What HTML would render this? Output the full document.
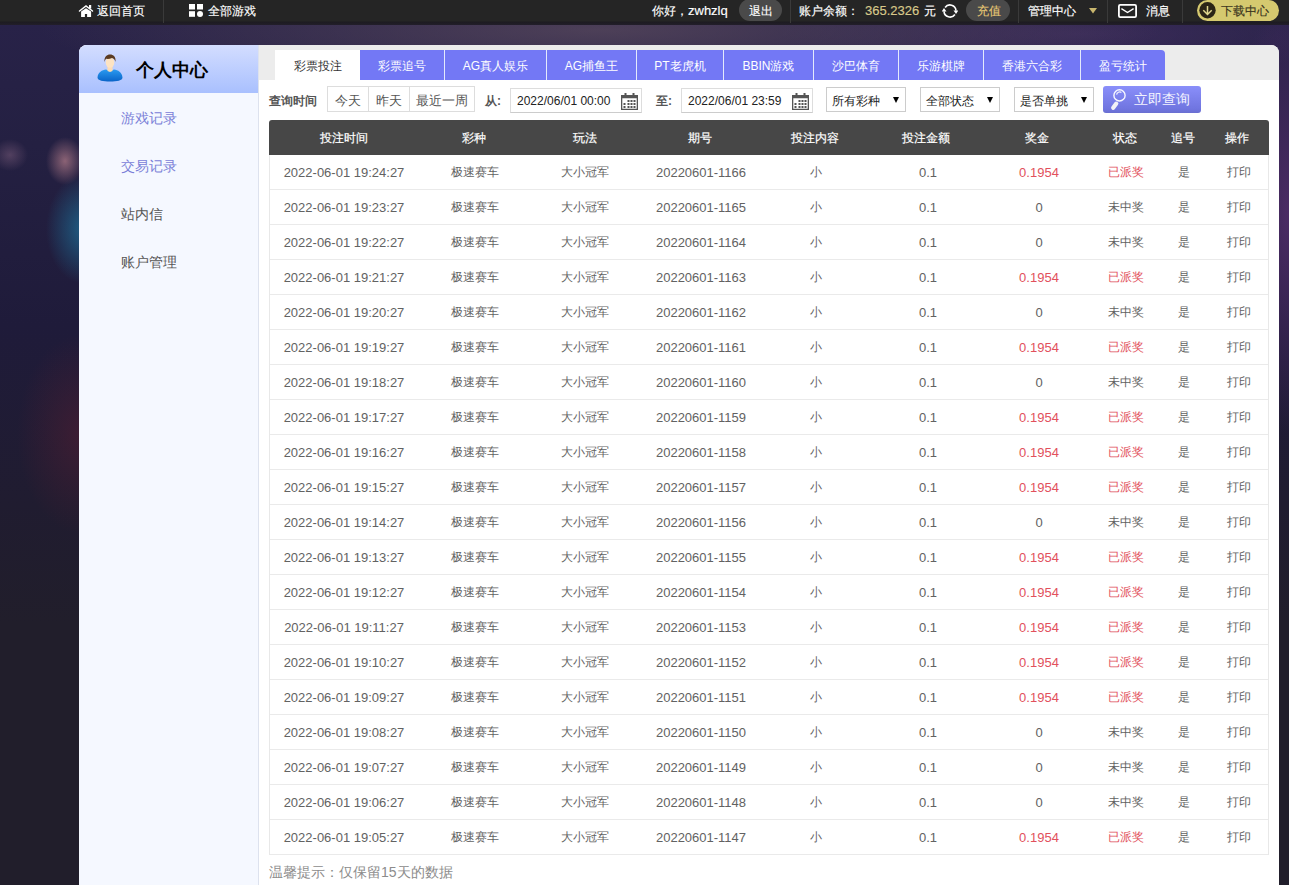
<!DOCTYPE html>
<html><head><meta charset="utf-8">
<style>
*{margin:0;padding:0;box-sizing:border-box}
html,body{width:1289px;height:885px;overflow:hidden}
body{font-family:"Liberation Sans",sans-serif;font-size:12px;color:#555;position:relative;background:#211e2c}
.abs{position:absolute}
.bg{position:absolute;left:0;top:24px;width:1289px;height:861px;
background:
radial-gradient(ellipse 19px 24px at 65px 137px,rgba(165,115,130,0.8),rgba(165,115,130,0) 100%),
radial-gradient(ellipse 18px 16px at 10px 131px,rgba(120,90,120,0.55),rgba(120,90,120,0) 100%),
radial-gradient(ellipse 38px 55px at 84px 205px,rgba(30,115,155,0.75),rgba(30,115,155,0) 100%),
radial-gradient(ellipse 65px 100px at 82px 410px,rgba(85,30,50,0.55),rgba(85,30,50,0) 100%),
radial-gradient(ellipse 60px 220px at 1289px 190px,rgba(80,45,105,0.9),rgba(80,45,105,0) 100%),
radial-gradient(ellipse 560px 60px at 600px 6px,rgba(100,82,98,0.62),rgba(100,82,98,0) 100%),
radial-gradient(ellipse 300px 40px at 1080px 10px,rgba(70,50,100,0.6),rgba(70,50,100,0) 100%),
linear-gradient(180deg,#282248 0px,#242042 120px,#1f1b3a 300px,#201c30 480px,#211e2b 600px,#211e2b 861px)}
.topbar{position:absolute;left:0;top:0;width:1289px;height:25px;background:linear-gradient(180deg,#252525 0,#252525 21px,#1d1b21 22px,#221e2a 25px);color:#fff;font-size:12px}
.topbar .t{position:absolute;top:0;line-height:22px;white-space:nowrap;-webkit-text-stroke:0.15px}
.sep{position:absolute;top:0;width:1px;height:23px;background:#3a3a3a}
.pill{position:absolute;top:-1px;height:22px;border-radius:11px;background:#4a4a4a}
.panel{position:absolute;left:79px;top:45px;width:1200px;height:860px;background:#fff;border-radius:8px 8px 0 0;overflow:hidden}
.side{position:absolute;left:0;top:0;width:180px;height:860px;background:#f5f8ff;border-right:1px solid #dde2ee}
.side .hd{position:absolute;left:0;top:0;width:179px;height:48px;background:linear-gradient(180deg,#d3ddff,#a9c0fe)}
.side .hd b{position:absolute;left:57px;top:13px;font-size:18px;color:#000}
.side .it{position:absolute;left:42px;font-size:14px;color:#555}
.side .it.on{color:#7a80d8}
.tabband{position:absolute;left:180px;top:0;width:1020px;height:35px;background:#ececec}
.tab{position:absolute;top:50px;height:30px;background:#7378f5;color:#fff;font-size:12px;text-align:center;line-height:28px;padding-top:2px;white-space:nowrap}
.tab.act{background:#fff;color:#333}
.flt{position:absolute;font-size:13px;white-space:nowrap}
.qb{position:absolute;top:86px;height:26px;border:1px solid #ddd;background:#fff;font-size:13px;line-height:24px;padding-top:2px;text-align:center;color:#555}
.inp{position:absolute;top:88px;height:25px;border:1px solid #ddd;border-bottom-color:#ccc;background:#fff;font-size:12px;line-height:23px;color:#222;padding-left:6px;padding-top:1px}
.sel{position:absolute;top:87px;height:25px;border:1px solid #ccc;background:#fff;font-size:12px;line-height:23px;color:#222;padding-left:5px;padding-top:2px}
.sel i{position:absolute;right:6px;top:9px;width:0;height:0;border-left:3px solid transparent;border-right:3px solid transparent;border-top:6px solid #000}
.btn{position:absolute;left:1103px;top:86px;width:98px;height:27px;border-radius:3px;background:linear-gradient(180deg,#8a8ffa,#7075e0 85%,#6a6fd0);color:#f4f4ff;font-size:14px;line-height:27px}
table{position:absolute;left:269px;top:120px;width:1000px;border-collapse:separate;border-spacing:0;font-size:12px;table-layout:fixed}
td.n{font-size:13px}
th{-webkit-text-stroke:0.2px}
td:nth-child(2){padding-left:1px}td:nth-child(4){padding-left:2px}td:nth-child(5){padding-left:1px}
td:nth-child(6){padding-left:4px}td:nth-child(7){padding-left:4px}td:nth-child(8){padding-left:3px}td:nth-child(9){padding-left:2px}
th:nth-child(10){padding-right:4px}

th{background:#474747;color:#fff;font-weight:normal;height:35px;padding:2px 0 0 0}
td{height:35px;text-align:center;border-bottom:1px solid #eaeaea;color:#626262;padding:0;white-space:nowrap}

.red{color:#e2505c}
</style></head><body>
<div class="bg"></div>
<div class="topbar">
 <svg class="abs" style="left:78px;top:4px" width="16" height="14" viewBox="0 0 16 14">
  <polyline points="1.5,7 8,1.9 14.5,7" fill="none" stroke="#fff" stroke-width="1.5" stroke-linecap="round" stroke-linejoin="miter"/>
  <rect x="11" y="1" width="2.2" height="3.6" fill="#fff"/>
  <path d="M3.1 7.6 L8 4.3 L13.1 7.6 V13.1 H9.1 V10.1 H6.9 V13.1 H3.1 Z" fill="#fff"/>
 </svg>
 <span class="t" style="left:97px">返回首页</span>
 <div class="sep" style="left:163px"></div>
 <svg class="abs" style="left:189px;top:4px" width="14" height="13" viewBox="0 0 14 13">
  <rect x="0" y="0" width="6" height="5.5" fill="#fff"/><rect x="8" y="0" width="6" height="5.5" fill="#fff"/>
  <rect x="0" y="7.2" width="6" height="5.6" fill="#fff"/><circle cx="11" cy="10" r="3" fill="#fff"/>
 </svg>
 <span class="t" style="left:208px">全部游戏</span>
 <span class="t" style="left:652px">你好，<span style="font-size:13px">zwhzlq</span></span>
 <div class="pill" style="left:739px;width:43px"></div>
 <span class="t" style="left:749px">退出</span>
 <div class="sep" style="left:790px"></div>
 <span class="t" style="left:799px">账户余额：</span>
 <span class="t" style="left:865px;color:#d8c98a;font-size:13px">365.2326</span>
 <span class="t" style="left:924px">元</span>
 <svg class="abs" style="left:942px;top:3px" width="16" height="16" viewBox="0 0 16 16">
  <path d="M3.09 4.56 A6 6 0 0 1 14 7.6" fill="none" stroke="#fff" stroke-width="1.6"/>
  <path d="M12.91 11.44 A6 6 0 0 1 2 8.4" fill="none" stroke="#fff" stroke-width="1.6"/>
  <path d="M11.5 7.4 L16.5 7.4 L14 11 Z" fill="#fff"/>
  <path d="M-0.5 8.6 L4.5 8.6 L2 5 Z" fill="#fff"/>
 </svg>
 <div class="pill" style="left:966px;width:44px"></div>
 <span class="t" style="left:977px;color:#e6c874">充值</span>
 <div class="sep" style="left:1018px"></div>
 <span class="t" style="left:1028px">管理中心</span>
 <svg class="abs" style="left:1089px;top:8px" width="8" height="6" viewBox="0 0 8 6"><path d="M0 0 H8 L4 5.5 Z" fill="#c9b76e"/></svg>
 <div class="sep" style="left:1107px"></div>
 <svg class="abs" style="left:1118px;top:4px" width="19" height="14" viewBox="0 0 19 14">
  <rect x="0.9" y="0.9" width="17.2" height="12.2" rx="1.3" fill="none" stroke="#fff" stroke-width="1.8"/>
  <polyline points="3.4,4.6 9.5,8.5 15.6,4.6" fill="none" stroke="#fff" stroke-width="1.4"/>
 </svg>
 <span class="t" style="left:1146px">消息</span>
 <div class="sep" style="left:1182px"></div>
 <div class="pill" style="left:1197px;width:82px;top:0;height:21px;border-radius:10.5px;background:#d5c96f"></div>
 <svg class="abs" style="left:1199px;top:2px" width="17" height="17" viewBox="0 0 17 17">
  <circle cx="8.5" cy="8.3" r="8.2" fill="#2b2516"/>
  <path d="M8.5 4 V12.4 M4.3 8.3 L8.5 12.5 L12.7 8.3" fill="none" stroke="#e0d78e" stroke-width="1.5"/>
 </svg>
 <span class="t" style="left:1221px;color:#3b3520">下载中心</span>
</div>
<div class="panel">
 <div class="side">
  <div class="hd"><svg class="abs" style="left:18px;top:8px" width="26" height="29" viewBox="0 0 26 29">
 <defs><linearGradient id="bd" x1="0" y1="0" x2="0" y2="1"><stop offset="0" stop-color="#2a9af0"/><stop offset="1" stop-color="#0a64c8"/></linearGradient></defs>
 <path d="M0.5 24.5 C1 19 5 17 9 16.5 L13 18 L17 16.5 C21 17 25 19 25.5 24.5 C25.5 27.5 20 28.5 13 28.5 C6 28.5 0.5 27.5 0.5 24.5 Z" fill="url(#bd)"/>
 <path d="M10.5 13 H15.5 V18 L13 19 L10.5 18 Z" fill="#fcdcb4"/>
 <ellipse cx="13" cy="9.5" rx="4.3" ry="5.2" fill="#fde3c2"/>
 <path d="M7.5 9 C7 3.5 10 1.5 13 1.5 C16.5 1.5 19 3.5 18.5 9 C18 6.5 16.5 5.5 15 5 C13 6 10.5 6 9 5.8 C8.2 6.8 7.8 8 7.5 9 Z" fill="#5b3b22"/>
</svg><b>个人中心</b></div>
  <div class="it on" style="top:65px">游戏记录</div>
  <div class="it on" style="top:113px">交易记录</div>
  <div class="it" style="top:161px">站内信</div>
  <div class="it" style="top:209px">账户管理</div>
 </div>
 <div class="tabband"></div>
</div>
<div class="tab act" style="left:275px;width:85px">彩票投注</div>
<div class="tab" style="left:360px;width:84px">彩票追号</div>
<div class="tab" style="left:445px;width:101px">AG真人娱乐</div>
<div class="tab" style="left:547px;width:89px">AG捕鱼王</div>
<div class="tab" style="left:637px;width:86px">PT老虎机</div>
<div class="tab" style="left:724px;width:89px">BBIN游戏</div>
<div class="tab" style="left:814px;width:84px">沙巴体育</div>
<div class="tab" style="left:899px;width:84px">乐游棋牌</div>
<div class="tab" style="left:984px;width:96px">香港六合彩</div>
<div class="tab" style="left:1081px;width:84px;border-top-right-radius:4px">盈亏统计</div>

<div class="abs" style="left:444px;top:50px;width:1px;height:30px;background:#e4eafc"></div><div class="abs" style="left:546px;top:50px;width:1px;height:30px;background:#e4eafc"></div><div class="abs" style="left:636px;top:50px;width:1px;height:30px;background:#e4eafc"></div><div class="abs" style="left:723px;top:50px;width:1px;height:30px;background:#e4eafc"></div><div class="abs" style="left:813px;top:50px;width:1px;height:30px;background:#e4eafc"></div><div class="abs" style="left:898px;top:50px;width:1px;height:30px;background:#e4eafc"></div><div class="abs" style="left:983px;top:50px;width:1px;height:30px;background:#e4eafc"></div><div class="abs" style="left:1080px;top:50px;width:1px;height:30px;background:#e4eafc"></div>
<div class="flt" style="left:269px;top:93px;font-weight:bold;color:#555;font-size:12px">查询时间</div>
<div class="qb" style="left:327px;width:42px">今天</div>
<div class="qb" style="left:368px;width:42px">昨天</div>
<div class="qb" style="left:409px;width:66px">最近一周</div>
<div class="flt" style="left:485px;top:93px;font-weight:bold;color:#555;font-size:12px">从:</div>
<div class="inp" style="left:510px;width:132px">2022/06/01 00:00</div>
<div class="flt" style="left:656px;top:93px;font-weight:bold;color:#555;font-size:12px">至:</div>
<div class="inp" style="left:681px;width:132px">2022/06/01 23:59</div>
<svg class="abs" style="left:621px;top:93px" width="17" height="17" viewBox="0 0 17 17" fill="#555">
 <rect x="3.5" y="0" width="2" height="3"/><rect x="11.5" y="0" width="2" height="3"/>
 <path d="M0 2 H17 V17 H0 Z M1.3 5.3 V15.7 H15.7 V5.3 Z"/>
 <rect x="6.5" y="7" width="2" height="2"/><rect x="9.5" y="7" width="2" height="2"/><rect x="12.5" y="7" width="2" height="2"/>
 <rect x="2.5" y="10" width="2" height="2"/><rect x="6.5" y="10" width="2" height="2"/><rect x="9.5" y="10" width="2" height="2"/><rect x="12.5" y="10" width="2" height="2"/>
 <rect x="2.5" y="13" width="2" height="2"/><rect x="6.5" y="13" width="2" height="2"/><rect x="9.5" y="13" width="2" height="2"/><rect x="12.5" y="13" width="2" height="2"/>
</svg>
<svg class="abs" style="left:792px;top:93px" width="17" height="17" viewBox="0 0 17 17" fill="#555">
 <rect x="3.5" y="0" width="2" height="3"/><rect x="11.5" y="0" width="2" height="3"/>
 <path d="M0 2 H17 V17 H0 Z M1.3 5.3 V15.7 H15.7 V5.3 Z"/>
 <rect x="6.5" y="7" width="2" height="2"/><rect x="9.5" y="7" width="2" height="2"/><rect x="12.5" y="7" width="2" height="2"/>
 <rect x="2.5" y="10" width="2" height="2"/><rect x="6.5" y="10" width="2" height="2"/><rect x="9.5" y="10" width="2" height="2"/><rect x="12.5" y="10" width="2" height="2"/>
 <rect x="2.5" y="13" width="2" height="2"/><rect x="6.5" y="13" width="2" height="2"/><rect x="9.5" y="13" width="2" height="2"/><rect x="12.5" y="13" width="2" height="2"/>
</svg>
<div class="sel" style="left:826px;width:80px">所有彩种<i></i></div>
<div class="sel" style="left:920px;width:80px">全部状态<i></i></div>
<div class="sel" style="left:1014px;width:80px">是否单挑<i></i></div>
<div class="btn"><svg class="abs" style="left:0;top:0" width="30" height="27" viewBox="0 0 30 27">
 <circle cx="16.5" cy="9.4" r="5.6" fill="none" stroke="#fff" stroke-width="1.4" opacity="0.95"/>
 <path d="M13.6 8.6 A3.2 3.2 0 0 1 18.4 6.4" fill="none" stroke="#fff" stroke-width="1.2" opacity="0.9"/>
 <line x1="13.3" y1="17.6" x2="10.2" y2="21.8" stroke="#f2f2f6" stroke-width="4.2" stroke-linecap="round"/>
</svg><span class="abs" style="left:31px;top:0">立即查询</span></div>

<table>
<colgroup><col style="width:150px"><col style="width:110px"><col style="width:111px"><col style="width:120px"><col style="width:110px"><col style="width:112px"><col style="width:110px"><col style="width:65px"><col style="width:52px"><col style="width:60px"></colgroup>
<tr><th style="border-top-left-radius:3px">投注时间</th><th>彩种</th><th>玩法</th><th>期号</th><th>投注内容</th><th>投注金额</th><th>奖金</th><th>状态</th><th>追号</th><th style="border-top-right-radius:3px">操作</th></tr>
<tr><td class="n">2022-06-01 19:24:27</td><td>极速赛车</td><td>大小冠军</td><td class="n">20220601-1166</td><td>小</td><td class="n">0.1</td><td class="red n">0.1954</td><td class="red">已派奖</td><td>是</td><td>打印</td></tr>
<tr><td class="n">2022-06-01 19:23:27</td><td>极速赛车</td><td>大小冠军</td><td class="n">20220601-1165</td><td>小</td><td class="n">0.1</td><td class="n">0</td><td>未中奖</td><td>是</td><td>打印</td></tr>
<tr><td class="n">2022-06-01 19:22:27</td><td>极速赛车</td><td>大小冠军</td><td class="n">20220601-1164</td><td>小</td><td class="n">0.1</td><td class="n">0</td><td>未中奖</td><td>是</td><td>打印</td></tr>
<tr><td class="n">2022-06-01 19:21:27</td><td>极速赛车</td><td>大小冠军</td><td class="n">20220601-1163</td><td>小</td><td class="n">0.1</td><td class="red n">0.1954</td><td class="red">已派奖</td><td>是</td><td>打印</td></tr>
<tr><td class="n">2022-06-01 19:20:27</td><td>极速赛车</td><td>大小冠军</td><td class="n">20220601-1162</td><td>小</td><td class="n">0.1</td><td class="n">0</td><td>未中奖</td><td>是</td><td>打印</td></tr>
<tr><td class="n">2022-06-01 19:19:27</td><td>极速赛车</td><td>大小冠军</td><td class="n">20220601-1161</td><td>小</td><td class="n">0.1</td><td class="red n">0.1954</td><td class="red">已派奖</td><td>是</td><td>打印</td></tr>
<tr><td class="n">2022-06-01 19:18:27</td><td>极速赛车</td><td>大小冠军</td><td class="n">20220601-1160</td><td>小</td><td class="n">0.1</td><td class="n">0</td><td>未中奖</td><td>是</td><td>打印</td></tr>
<tr><td class="n">2022-06-01 19:17:27</td><td>极速赛车</td><td>大小冠军</td><td class="n">20220601-1159</td><td>小</td><td class="n">0.1</td><td class="red n">0.1954</td><td class="red">已派奖</td><td>是</td><td>打印</td></tr>
<tr><td class="n">2022-06-01 19:16:27</td><td>极速赛车</td><td>大小冠军</td><td class="n">20220601-1158</td><td>小</td><td class="n">0.1</td><td class="red n">0.1954</td><td class="red">已派奖</td><td>是</td><td>打印</td></tr>
<tr><td class="n">2022-06-01 19:15:27</td><td>极速赛车</td><td>大小冠军</td><td class="n">20220601-1157</td><td>小</td><td class="n">0.1</td><td class="red n">0.1954</td><td class="red">已派奖</td><td>是</td><td>打印</td></tr>
<tr><td class="n">2022-06-01 19:14:27</td><td>极速赛车</td><td>大小冠军</td><td class="n">20220601-1156</td><td>小</td><td class="n">0.1</td><td class="n">0</td><td>未中奖</td><td>是</td><td>打印</td></tr>
<tr><td class="n">2022-06-01 19:13:27</td><td>极速赛车</td><td>大小冠军</td><td class="n">20220601-1155</td><td>小</td><td class="n">0.1</td><td class="red n">0.1954</td><td class="red">已派奖</td><td>是</td><td>打印</td></tr>
<tr><td class="n">2022-06-01 19:12:27</td><td>极速赛车</td><td>大小冠军</td><td class="n">20220601-1154</td><td>小</td><td class="n">0.1</td><td class="red n">0.1954</td><td class="red">已派奖</td><td>是</td><td>打印</td></tr>
<tr><td class="n">2022-06-01 19:11:27</td><td>极速赛车</td><td>大小冠军</td><td class="n">20220601-1153</td><td>小</td><td class="n">0.1</td><td class="red n">0.1954</td><td class="red">已派奖</td><td>是</td><td>打印</td></tr>
<tr><td class="n">2022-06-01 19:10:27</td><td>极速赛车</td><td>大小冠军</td><td class="n">20220601-1152</td><td>小</td><td class="n">0.1</td><td class="red n">0.1954</td><td class="red">已派奖</td><td>是</td><td>打印</td></tr>
<tr><td class="n">2022-06-01 19:09:27</td><td>极速赛车</td><td>大小冠军</td><td class="n">20220601-1151</td><td>小</td><td class="n">0.1</td><td class="red n">0.1954</td><td class="red">已派奖</td><td>是</td><td>打印</td></tr>
<tr><td class="n">2022-06-01 19:08:27</td><td>极速赛车</td><td>大小冠军</td><td class="n">20220601-1150</td><td>小</td><td class="n">0.1</td><td class="n">0</td><td>未中奖</td><td>是</td><td>打印</td></tr>
<tr><td class="n">2022-06-01 19:07:27</td><td>极速赛车</td><td>大小冠军</td><td class="n">20220601-1149</td><td>小</td><td class="n">0.1</td><td class="n">0</td><td>未中奖</td><td>是</td><td>打印</td></tr>
<tr><td class="n">2022-06-01 19:06:27</td><td>极速赛车</td><td>大小冠军</td><td class="n">20220601-1148</td><td>小</td><td class="n">0.1</td><td class="n">0</td><td>未中奖</td><td>是</td><td>打印</td></tr>
<tr><td class="n">2022-06-01 19:05:27</td><td>极速赛车</td><td>大小冠军</td><td class="n">20220601-1147</td><td>小</td><td class="n">0.1</td><td class="red n">0.1954</td><td class="red">已派奖</td><td>是</td><td>打印</td></tr>
</table>
<div class="abs" style="left:269px;top:155px;width:1px;height:700px;background:#e8e8e8"></div>
<div class="abs" style="left:1268px;top:155px;width:1px;height:700px;background:#e8e8e8"></div>
<div class="flt" style="left:269px;top:864px;color:#8c8c8c;font-size:14px">温馨提示：仅保留15天的数据</div>
</body></html>
